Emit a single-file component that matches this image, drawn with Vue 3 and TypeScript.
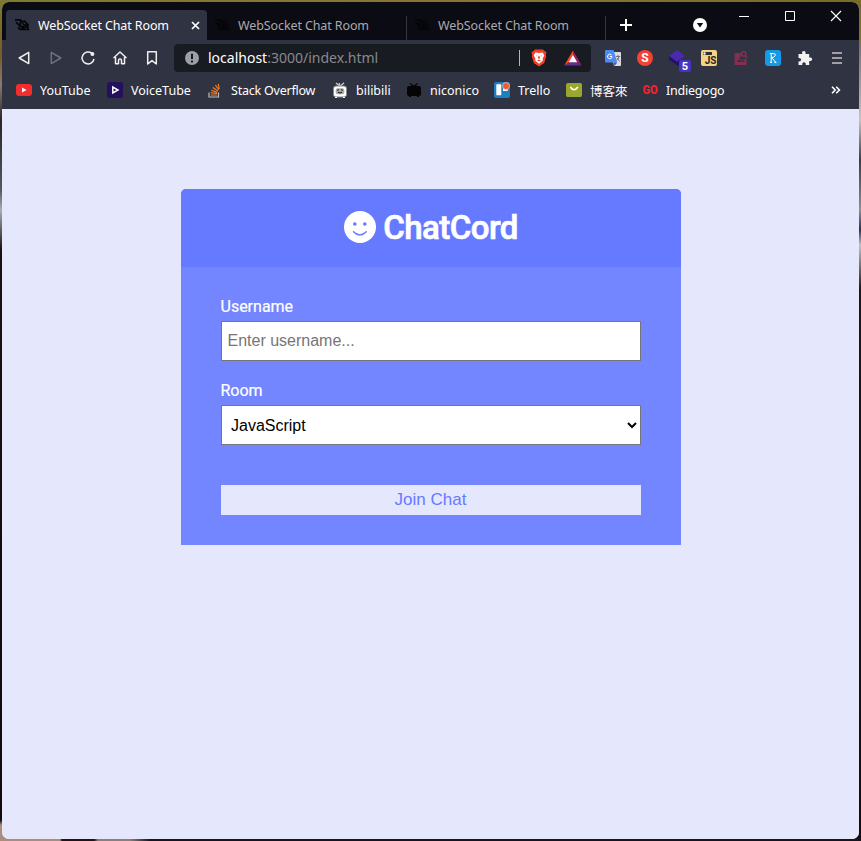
<script setup lang="ts">
import { ref } from 'vue'

interface Bookmark {
  id: string
  label: string
}

const tabs = ['WebSocket Chat Room', 'WebSocket Chat Room', 'WebSocket Chat Room']
const bookmarks: Bookmark[] = [
  { id: 'youtube', label: 'YouTube' },
  { id: 'voicetube', label: 'VoiceTube' },
  { id: 'stack', label: 'Stack Overflow' },
  { id: 'bilibili', label: 'bilibili' },
  { id: 'niconico', label: 'niconico' },
  { id: 'trello', label: 'Trello' },
  { id: 'books', label: '博客來' },
  { id: 'indiegogo', label: 'Indiegogo' },
]
const rooms = ['JavaScript', 'Python', 'PHP', 'C#', 'Ruby', 'Java']
const username = ref('')
const room = ref('JavaScript')
</script>

<template>
  <div class="desktop">
    <div class="window">
      <header class="tabstrip">
        <div v-for="(tab, i) in tabs" :key="i" class="tab" :class="{ active: i === 0 }">
          <svg class="favicon" viewBox="0 0 15 14" fill="none" stroke="currentColor" stroke-width="1.7">
            <path d="M0 1.8h5.2l2 2M1 4.2l4 4M3 9.5l2.4 2h8.8M12.8 11V6.5L9.5 3.2 5.5 4l-.4 4 3 2.2 3-1.2.2-3M7.3 5l3 3M7.2 7.8l1.5 1.2" />
          </svg>
          <span class="tab-title">{{ tab }}</span>
          <svg v-if="i === 0" class="tab-close" viewBox="0 0 9 9" stroke="#fff" stroke-width="1.7"><path d="M1 1l7 7M8 1L1 8" /></svg>
        </div>
        <svg class="plus" viewBox="0 0 12 12" stroke="#fff" stroke-width="2"><path d="M6 0v12M0 6h12" /></svg>
        <svg class="tab-search" viewBox="0 0 14 14"><circle cx="7" cy="7" r="7" fill="#fff" /><path d="M3.8 5h6.4L7 9.5z" fill="#0b0b14" /></svg>
        <div class="controls">
          <svg viewBox="0 0 12 12" stroke="#fff" fill="none"><path d="M1 6.5h10" /></svg>
          <svg viewBox="0 0 12 12" stroke="#fff" fill="none"><path d="M1.5 1.5h9v9h-9z" /></svg>
          <svg viewBox="0 0 12 12" stroke="#fff" fill="none" stroke-width="1.1"><path d="M1 1l10 10M11 1L1 11" /></svg>
        </div>
      </header>

      <div class="toolbar">
        <nav class="nav">
          <svg viewBox="0 0 16 16" class="line"><path d="M12.7 2.4v11.2L3.2 8z" /></svg>
          <svg viewBox="0 0 16 16" class="line dim"><path d="M3.3 2.4v11.2L12.8 8z" /></svg>
          <svg viewBox="0 0 16 16" class="line"><path d="M11.8 3.2A6 6 0 1 0 14 9" /><circle cx="12.4" cy="4" r="2" fill="#f0eeee" stroke="none" /></svg>
          <svg viewBox="0 0 16 16" class="line"><path d="M1.5 8L8 2l6.5 6M3.5 7v6.8h3V10.5q0-1.6 1.5-1.6t1.5 1.6v3.3h3V7" /></svg>
          <svg viewBox="0 0 16 16" class="line"><path d="M3.7 1.7h8.6v12.3L8 10.6 3.7 14z" /></svg>
        </nav>
        <div class="address">
          <svg class="info" viewBox="0 0 14 14"><circle cx="7" cy="7" r="7" fill="#9aa0a6" /><path d="M7 2.8v5.2M7 9.4v2" stroke="#17191f" stroke-width="2" /></svg>
          <span class="url"><b>localhost</b>:3000/index.html</span>
          <i class="bar"></i>
          <svg class="shield" viewBox="0 0 16 18">
            <path d="M4 .5h8l1.5 1.5 2 1-.6 3 .3 1.5-2 6.5L8 17.5 2.8 14 .8 7.5 1.1 6 .5 3l2-1z" fill="#f1402a" />
            <path d="M4.5 3.5L8 4.1l3.5-.6 1.8 2.7-1.7 3.6.3 1.6L8 14.7l-3.9-3.3.3-1.6-1.7-3.6z" fill="#fff" />
            <path d="M4.8 6.3l1.8.6-.6.7zm6.4 0l-1.8.6.6.7zM7.6 7l-.8 2.2L8 9.8l1.2-.6L8.400 7zM6 11.300L8 10.700l2 .6L8 12.400z" fill="#f1402a" />
          </svg>
          <svg class="bat" viewBox="0 0 18 16"><path d="M9 .5L.3 15.5l5.4-3.400L9 6.3z" fill="#ff4724" /><path d="M9 .5l8.7 15-5.4-3.400L9 6.3z" fill="#9e1f63" /><path d="M.3 15.5h17.4l-5.4-3.400H5.7z" fill="#662d91" /><path d="M9 5l4.200 7.300H4.800z" fill="#fff" /></svg>
        </div>
        <div class="extensions">
          <svg viewBox="0 0 16 16"><path d="M6 2h9q1 0 1 1v12q0 1-1 1H9z" fill="#dcdcdc" /><path d="M1 0h7.6l3.6 12.5H1q-1 0-1-1V1q0-1 1-1z" fill="#4c8bf5" /><path d="M8.6 12.5h3.6L9.5 16z" fill="#3059bd" /><path d="M6.600 5A2.3 2.3 0 1 0 7 7.300V6.5H4.8" stroke="#fff" fill="none" /><path d="M11 6.5h4.200M13.900 6.500q-.7 3.2-2.200 4M12 8q1 2 3 3.500M13 5v1.500" stroke="#667" fill="none" stroke-width=".9" /></svg>
          <svg viewBox="0 0 16 16"><circle cx="8" cy="8" r="8" fill="#f44336" /><text x="8" y="12.3" class="bold" font-size="12" fill="#fff">S</text></svg>
          <svg class="wide" viewBox="0 0 24 22"><path d="M9 0l8 6-8 6-8-6z" fill="#4b28b0" /><path d="M1 6l8 6 3-2.2V14l-2 2-9-6.5z" fill="#24106c" /><rect x="11" y="10" width="12" height="12" rx="2" fill="#4335c2" /><text x="17" y="20" class="bold" font-size="11" fill="#fff">5</text></svg>
          <svg viewBox="0 0 16 16"><rect width="16" height="16" rx="2" fill="#f5d384" /><path d="M2 2h9v3H2z" fill="#32302c" /><circle cx="3.5" cy="3.5" r="1.2" fill="#fff" /><text x="9.5" y="14.2" class="bold" font-size="10" fill="#292522">JS</text></svg>
          <svg viewBox="0 0 16 16" fill="#842e51"><path d="M1.500 3h6v3l-1 2 2 2 5-1.500v6.500h-12z" /><path d="M4 12l2-3 2 2 2-1 2 2z" fill="#303342" /><circle cx="10.7" cy="4" r="2.2" fill="none" stroke="#842e51" stroke-width="1.6" /><path d="M12 5.5l2 2.5" stroke="#842e51" stroke-width="1.6" /></svg>
          <svg viewBox="0 0 16 16"><rect width="16" height="16" rx="3" fill="#159be5" /><path d="M6.2 4v8M4.7 3.5h4q2.2.2 1.5 2.2-.7 1.8-3.5 1.8L10.5 12M5 12.4h2M9.4 12.4h2" stroke="#fff" fill="none" /></svg>
          <svg viewBox="0 0 16 16"><path d="M1.5 4h3.8q-.8-3 1.5-3t1.7 3h3.7v3.6q3-.7 3 1.6t-3 1.7V15H8.7q.4-2.7-1.7-2.7T5.3 15H1.5v-3.6q2.7.2 2.7-1.7T1.5 8z" fill="#f3f2f2" /></svg>
          <svg viewBox="0 0 16 16" stroke="#c9c4c6" stroke-width="1.7"><path d="M3 3h10M3 8h10M3 13h10" /></svg>
        </div>
      </div>

      <div class="bookmarks">
        <div v-for="b in bookmarks" :key="b.id" class="bookmark" :class="b.id">
          <svg viewBox="0 0 16 16">
            <template v-if="b.id === 'youtube'"><rect y="2" width="16" height="12" rx="3" fill="#f32d2d" /><path d="M6 5.5v5L10.5 8z" fill="#fff" /></template>
            <template v-else-if="b.id === 'voicetube'"><rect width="16" height="16" rx="2.5" fill="#25105e" /><path d="M5.8 5v6L11 8z" fill="none" stroke="#fff" stroke-width="1.5" /></template>
            <template v-else-if="b.id === 'stack'"><path d="M2 10.500v4.500h9.500V10.500" fill="none" stroke="#bcbbbb" stroke-width="1.2" /><path d="M3.700 13H10M3.800 10.700l6.200.8M4.400 8.200l5.900 2.200M5.800 5.500l5.200 3.500M8.300 3l3.500 4.700M11.200 1.800l1 5" stroke="#f47f24" stroke-width="1.2" /></template>
            <template v-else-if="b.id === 'bilibili'"><path d="M4 1l4 3.5L12 .8M7 1l1.2 3" stroke="#ccc" fill="none" stroke-width="1.3" /><rect x="1.5" y="4" width="13" height="11" rx="2.5" fill="#fff" stroke="#888" /><rect x="3.7" y="6.3" width="8.6" height="6" rx="2" fill="#aaa" /><path d="M5.200 8.400l1.800-.8M10.800 8.400L9 7.600M6 10.200l2 .8 2-.8" stroke="#111" fill="none" /><path d="M4 15v1M12 15v1" stroke="#eee" stroke-width="2" /></template>
            <template v-else-if="b.id === 'niconico'"><path d="M4 1.5l4 3 3.5-3" stroke="#050505" stroke-width="1.4" fill="none" /><rect x="1" y="4" width="14" height="10" rx="2" fill="#050505" /><path d="M4 13v2M12 13v2" stroke="#050505" stroke-width="2" /></template>
            <template v-else-if="b.id === 'trello'"><rect width="16" height="16" rx="2" fill="#1d7fc0" /><rect x="2.3" y="2.3" width="5" height="11" rx=".6" fill="#fff" /><rect x="9" y="2.3" width="4.8" height="6.7" rx=".6" fill="#fff" /><circle cx="12" cy="4" r="3.5" fill="#f05a28" stroke="#e8dede" stroke-width=".6" /></template>
            <template v-else-if="b.id === 'books'"><path d="M2 1h12.5q1.5 0 1.5 2v10q0 2-1.5 2H1.5Q0 15 0 13V3q0-2 2-2z" fill="#9aa72c" /><path d="M4.3 5q3.7 5.5 7.6 0" fill="none" stroke="#fff" stroke-width="1.5" /></template>
            <template v-else><text x="8" y="12.2" class="bold heavy" font-size="12.5" textLength="15" lengthAdjust="spacingAndGlyphs" fill="#ed2330">GO</text></template>
          </svg>
          <span>{{ b.label }}</span>
        </div>
        <svg class="more" viewBox="0 0 10 8" stroke="#fff" fill="none" stroke-width="1.6"><path d="M1 .8L4.2 4 1 7.2M5.2.8L8.4 4 5.2 7.2" /></svg>
      </div>

      <main class="page">
        <section class="card">
          <div class="card-header">
            <svg class="smile" viewBox="0 0 32 32">
              <circle cx="16" cy="16" r="16" fill="#fff" />
              <circle cx="10.800" cy="13" r="1.8" fill="#667aff" />
              <circle cx="20.800" cy="13" r="1.8" fill="#667aff" />
              <path d="M9.500 20.800q6.400 6.400 12.800 0" fill="none" stroke="#667aff" stroke-width="1.5" stroke-linecap="round" />
            </svg>
            <h1>ChatCord</h1>
          </div>
          <form class="form" @submit.prevent>
            <label for="username">Username</label>
            <input id="username" v-model="username" type="text" placeholder="Enter username..." />
            <label for="room">Room</label>
            <select id="room" v-model="room">
              <option v-for="r in rooms" :key="r">{{ r }}</option>
            </select>
            <button type="submit">Join Chat</button>
          </form>
        </section>
      </main>
    </div>
  </div>
</template>

<style>
body { margin: 0; overflow: hidden; }
</style>

<style scoped>
* { box-sizing: border-box; }
svg { display: block; flex: none; overflow: visible; }
.desktop {
  width: 861px; height: 841px; padding: 2px;
  background:
    linear-gradient(90deg, #ab8d7c 0 60px, #251012 62px 94px, #8b8078 98px 130px, #17151b 150px) bottom / 100% 3px no-repeat,
    linear-gradient(90deg, #7d7a2d, #8a7436 50%, #776c24) top / 100% 3px no-repeat,
    linear-gradient(#7d7a2d 0, #7a5a2a 55px, #8b7a70 85px, #2a2526 120px, #55585c 190px, #a9adb0 210px, #17110f 250px, #0f0b0d 820px, #ab8d7c 825px) left / 50% 100% no-repeat,
    linear-gradient(#776c24 0, #7d7430 38px, #777 50px, #c4c4c4 120px, #3a3d42 160px, #8b8f96 210px, #26344f 230px, #c0c2c4 245px, #18181c 290px, #101014) right / 50% 100% no-repeat;
}
.window { height: 837px; width: 857px; border-radius: 7px; overflow: hidden; background: #e5e7fd; display: flex; flex-direction: column; font-family: "Noto Sans", "Noto Sans CJK TC", sans-serif; }
.tabstrip { height: 38px; background: #0b0b14; display: flex; align-items: flex-end; padding-left: 4px; flex: none; }
.tab { width: 200px; height: 24px; display: flex; align-items: center; padding: 0 0 6px 9px; color: #a9aaae; font-size: 12.5px; }
.tab:nth-child(3) { padding-left: 8px; border: solid #35363e; border-width: 0 1px; }
.tab.active { width: 201px; height: 30px; margin-right: -1px; padding-bottom: 0; border-radius: 4px 4px 0 0; background: #303342; color: #fff; }
.favicon { width: 15px; height: 14px; color: #050507; }
.tab-title { width: 131px; margin-left: 8px; white-space: nowrap; letter-spacing: -.11px; }
.tab-close { width: 9px; height: 9px; margin-left: 22px; }
.plus { width: 12px; height: 12px; margin: 0 0 9px 14px; }
.tab-search { width: 14px; height: 14px; margin: 0 0 8px 61px; }
.controls { display: flex; gap: 34px; margin: 0 0 18px 31px; }
.controls svg { width: 12px; height: 12px; }
.toolbar { height: 35px; flex: none; background: #303342; display: flex; align-items: center; padding: 0 0 0 14px; }
.nav { display: flex; gap: 16px; }
.nav svg { width: 16px; height: 16px; }
.line { fill: none; stroke: #f0eeee; stroke-width: 1.5; stroke-linejoin: round; }
.dim { stroke: #70717a; }
.address { width: 417px; height: 28px; margin-left: 14px; border-radius: 4px; background: #181b22; display: flex; align-items: center; padding-left: 11px; }
.info { width: 14px; height: 14px; }
.url { width: 311px; margin-left: 9px; font-size: 14px; color: #88898c; white-space: nowrap; }
.url b { color: #fff; font-weight: 400; }
.bar { width: 1px; height: 16px; background: #b5b6b8; }
.shield { width: 16px; height: 18px; margin-left: 11px; }
.bat { width: 18px; height: 16px; margin-left: 17px; }
.extensions { height: 16px; display: flex; gap: 16px; margin-left: 14px; }
.extensions svg { width: 16px; height: 16px; }
.extensions svg.wide { width: 24px; height: 22px; margin: 0 -7px 0 -1px; }
.bold { font-family: Roboto, sans-serif; font-weight: 700; text-anchor: middle; }
.heavy { font-weight: 900; }
.bookmarks { height: 34px; flex: none; background: #303342; display: grid; grid-template-columns: 91px 100px 125px 74px 88px 72px 76px 189px 10px; align-items: center; padding: 0 0 4px 14px; color: #fff; font-size: 12.5px; }
.bookmark { display: flex; align-items: center; gap: 8px; white-space: nowrap; }
.bookmark svg { width: 16px; height: 16px; }
.stack, .indiegogo { letter-spacing: -.22px; }
.more { width: 10px; height: 8px; }
.page { flex: 1; background: #e5e7fd; padding-top: 80px; font-family: Roboto, sans-serif; }
.card { width: 500px; margin: 0 auto 0 179px; border-radius: 5px 5px 0 0; overflow: hidden; color: #fff; background: #7386ff; }
.card-header { height: 78px; background: #667aff; display: flex; align-items: center; justify-content: center; gap: 7px; }
.smile { width: 32px; height: 32px; margin-top: -2px; }
h1 { margin: 0; font-size: 33px; line-height: 38px; font-weight: 500; letter-spacing: -.55px; -webkit-text-stroke: .7px #fff; }
.form { height: 278px; padding: 30px 40px; display: flex; flex-direction: column; }
label { font-size: 16px; line-height: 19px; margin: 0 0 5px -.5px; -webkit-text-stroke: .2px #fff; }
input, select { width: 420px; height: 40px; margin: 0 0 20px; border: 1px solid #767676; background: #fff; color: #000; border-radius: 0; font: 16px "Liberation Sans", Arial, sans-serif; }
input { padding: 5px 5px 5px 5.5px; }
input::placeholder { color: #757575; }
select { padding: 5px 6px 5px 5px; }
button { height: 30px; margin: 20px 0 0; padding: 0 1px 0 0; border: 0; background: #e5e7fd; color: #667aff; font: 17px "Liberation Sans", Arial, sans-serif; }
</style>
